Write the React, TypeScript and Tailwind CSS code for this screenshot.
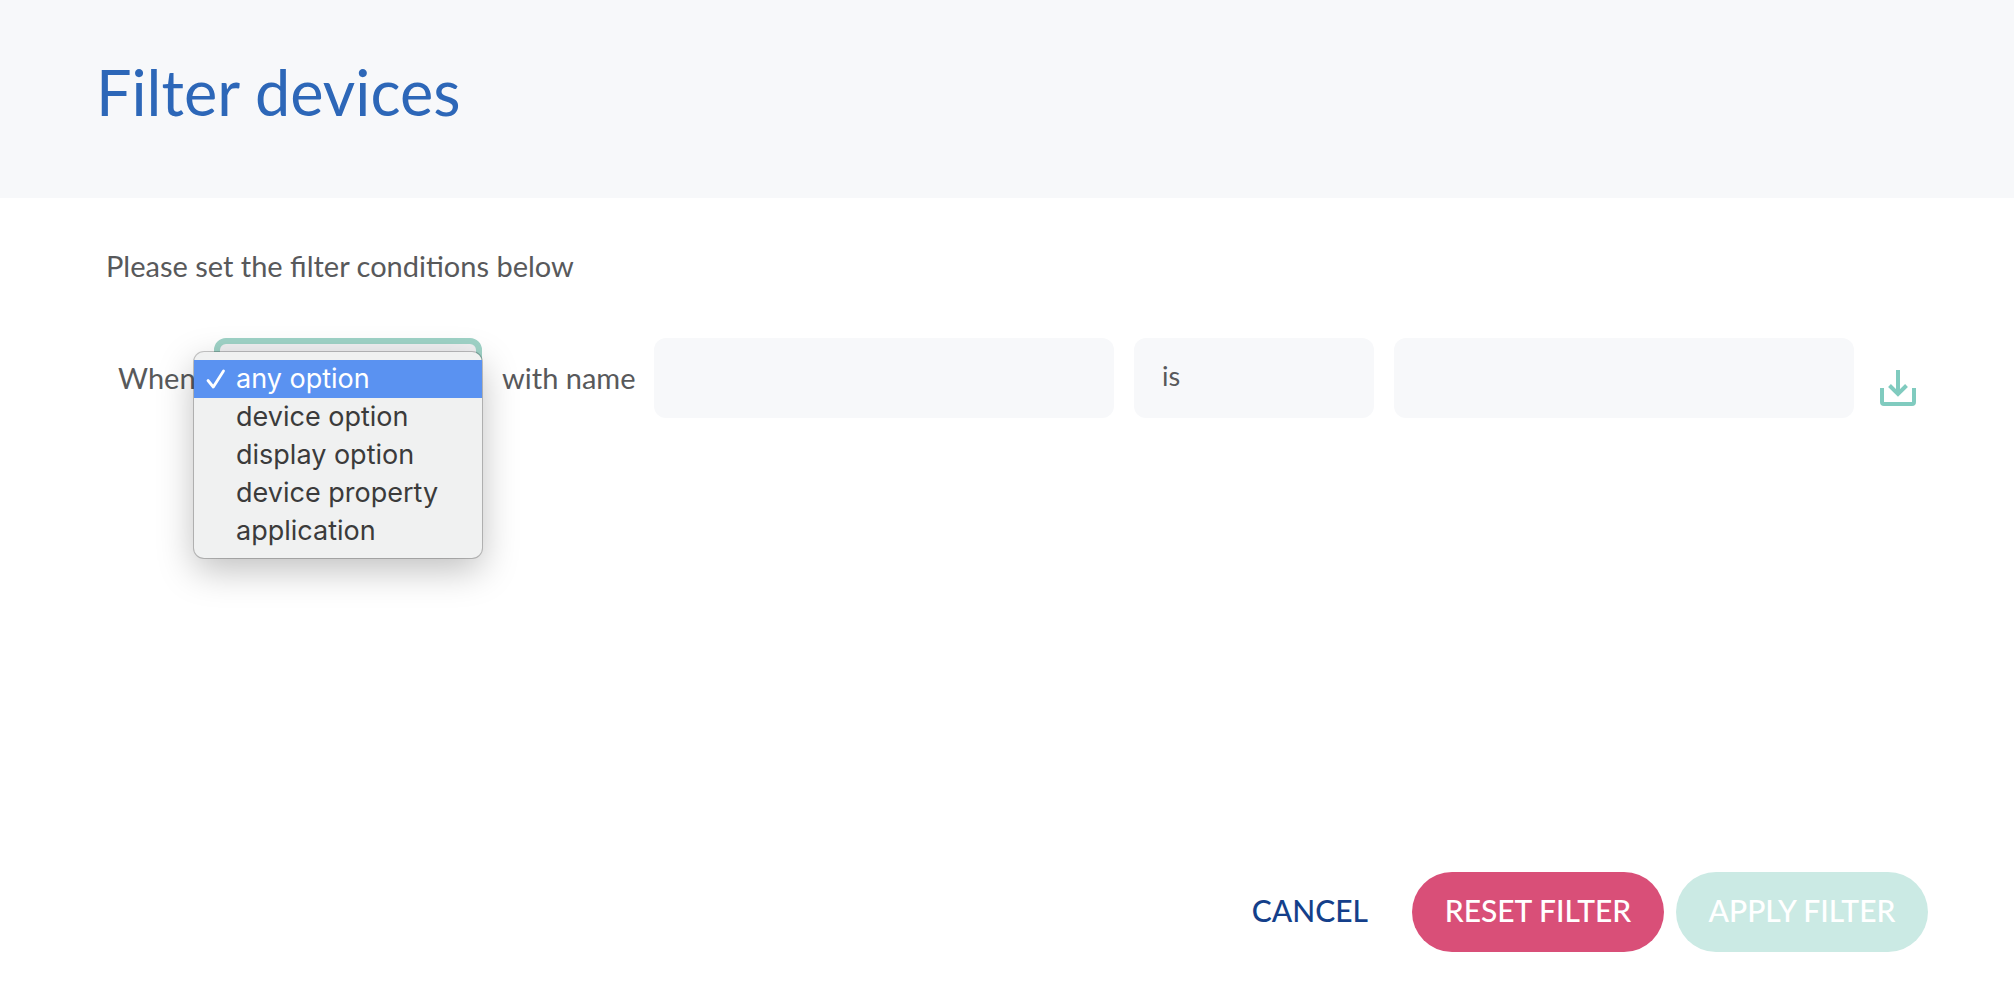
import React, { useState } from "react";

const OPTIONS = [
  "any option",
  "device option",
  "display option",
  "device property",
  "application",
];

const CONDITIONS = ["is", "is not", "contains"];

const CheckIcon = () => (
  <svg
    className="h-5 w-5"
    viewBox="0 0 20 20"
    fill="none"
    stroke="currentColor"
    strokeWidth="2.8"
    strokeLinecap="round"
    strokeLinejoin="round"
    aria-hidden="true"
  >
    <path d="M2 11.5 7.3 18 17.5 2" />
  </svg>
);

const SaveIcon = () => (
  <svg
    className="h-9 w-9"
    viewBox="0 0 36 36"
    fill="none"
    stroke="currentColor"
    strokeWidth="4"
    aria-hidden="true"
  >
    <path d="M2 18v14a2 2 0 0 0 2 2h28a2 2 0 0 0 2-2V18" />
    <path d="M18 0v24" />
    <path d="m9.5 15.5 8.5 8.5 8.5-8.5" />
  </svg>
);

const App = () => {
  const [option, setOption] = useState(OPTIONS[0]);
  const [isOpen, setIsOpen] = useState(true);

  const handleSelect = (value: string) => {
    setOption(value);
    setIsOpen(false);
  };

  return (
    <div className="flex min-h-screen flex-col bg-white font-['Lato',sans-serif] text-[29px] leading-9 text-[#58595b]">
      <header className="bg-[#f7f8fa] px-24 pt-14 pb-[70px]">
        <h1 className="text-[63px] leading-[72px] text-[#2d67b8]">
          Filter devices
        </h1>
      </header>

      <form
        className="flex grow flex-col"
        onSubmit={(e) => e.preventDefault()}
      >
        <main className="grow pt-[50px] pr-[98px] pl-[106px]">
          <p>Please set the filter conditions below</p>

          <div className="mt-[54px] flex items-center gap-5 pl-3">
            <label htmlFor="option" className="w-[76px] shrink-0">
              When
            </label>
            <div className="relative w-[268px] shrink-0">
              <select
                id="option"
                className="h-20 w-full appearance-none rounded-xl border-6 border-[#9fd3c7] bg-[#f0f0f2] px-6 outline-none"
                value={option}
                onChange={(e) => setOption(e.target.value)}
              >
                {OPTIONS.map((item) => (
                  <option key={item}>{item}</option>
                ))}
              </select>
              {isOpen && (
                <ul
                  role="listbox"
                  aria-label="Option"
                  className="absolute top-3.5 right-0 -left-5 rounded-[10px] bg-[#f0f1f1] pt-2 pb-2 font-['Inter',sans-serif] text-[27px] text-[#3b3b3b] shadow-[0_0_0_1px_rgba(0,0,0,0.22),0_12px_36px_rgba(0,0,0,0.25)]"
                >
                  {OPTIONS.map((item) => (
                    <li
                      key={item}
                      role="option"
                      aria-selected={item === option}
                      className="flex h-[38px] items-center gap-2.5 pl-3 whitespace-nowrap aria-selected:bg-[#5a92f1] aria-selected:text-white"
                      onClick={() => handleSelect(item)}
                    >
                      <span className="w-5">
                        {item === option && <CheckIcon />}
                      </span>
                      {item}
                    </li>
                  ))}
                </ul>
              )}
            </div>
            <label htmlFor="name" className="w-[132px] shrink-0 whitespace-nowrap">
              with name
            </label>
            <input
              id="name"
              type="text"
              className="h-20 min-w-0 flex-1 rounded-xl bg-[#f7f8fa] px-7 outline-none"
            />
            <select
              aria-label="Condition"
              className="h-20 w-60 shrink-0 appearance-none rounded-xl bg-[#f7f8fa] px-7 pb-1 text-[27px] outline-none"
            >
              {CONDITIONS.map((item) => (
                <option key={item}>{item}</option>
              ))}
            </select>
            <input
              type="text"
              aria-label="Value"
              className="h-20 min-w-0 flex-1 rounded-xl bg-[#f7f8fa] px-7 outline-none"
            />
            <button
              type="button"
              aria-label="Save condition"
              className="ml-1.5 shrink-0 pt-5 text-[#80cbbf]"
            >
              <SaveIcon />
            </button>
          </div>
        </main>

        <footer className="flex justify-end gap-3 pr-[86px] pb-[42px] text-[30px] font-medium">
          <button type="button" className="h-20 px-8 pb-1 text-[#143f8a]">
            CANCEL
          </button>
          <button
            type="reset"
            className="h-20 w-[252px] rounded-full bg-[#d94f78] pb-1 text-white"
          >
            RESET FILTER
          </button>
          <button
            type="submit"
            disabled
            className="h-20 w-[252px] rounded-full bg-[#cbeae4] pb-1 text-white"
          >
            APPLY FILTER
          </button>
        </footer>
      </form>
    </div>
  );
};

export default App;
